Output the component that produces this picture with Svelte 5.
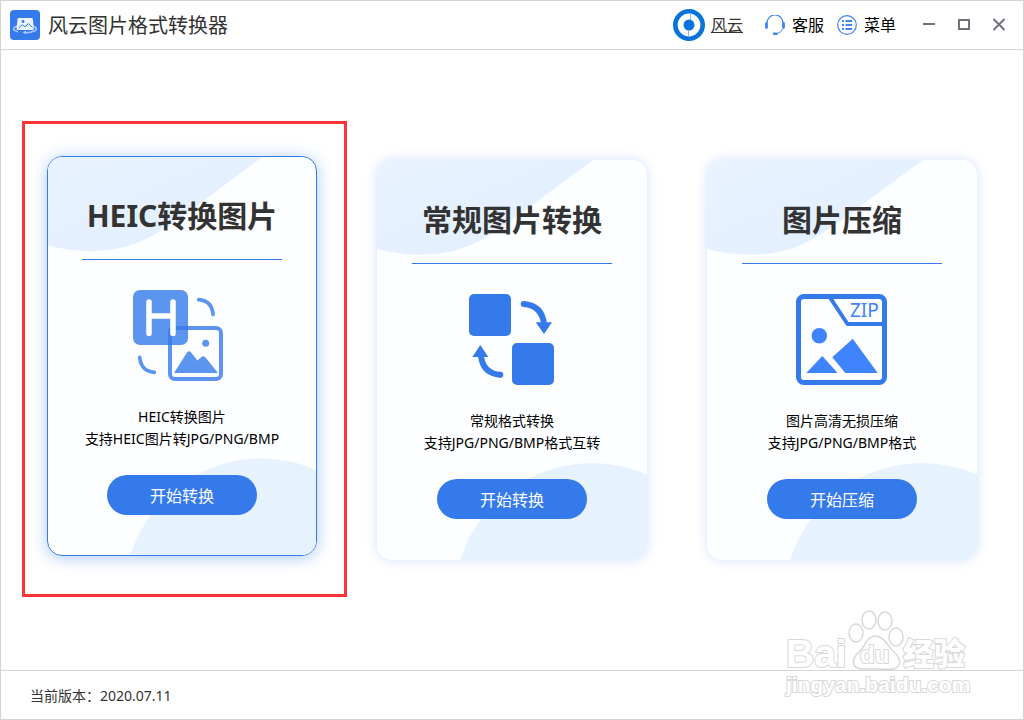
<script>
  const version = '2020.07.11';

  // Feature cards
  const cards = [
    {
      id: 'heic',
      title: 'HEIC转换图片',
      lines: ['HEIC转换图片', '支持HEIC图片转JPG/PNG/BMP'],
      action: '开始转换'
    },
    {
      id: 'convert',
      title: '常规图片转换',
      lines: ['常规格式转换', '支持JPG/PNG/BMP格式互转'],
      action: '开始转换'
    },
    {
      id: 'zip',
      title: '图片压缩',
      lines: ['图片高清无损压缩', '支持JPG/PNG/BMP格式'],
      action: '开始压缩'
    }
  ];

  let selected = $state('heic');
</script>

<div class="window">
  <header class="titlebar">
    <svg class="app-logo" viewBox="0 0 30 30" aria-hidden="true">
      <rect width="30" height="30" rx="4" fill="#347aeb" />
      <path d="M7 16C2 18 2.500 20.500 8 21.700M23 16c5 2 4.500 4.500-1 5.800-2 .6-4 .9-7 .9" fill="none" stroke="#a9c9fa" stroke-width="1.500" />
      <path d="M16 20.500l-3.500 2 3.500 1.800z" fill="#a9c9fa" />
      <path d="M9 8h12.500q1.300 0 1.400 1.300l.9 9.200q0 1.500-1.500 1.500H8q-1.500 0-1.500-1.500l1-9.200Q7.600 8 9 8z" fill="#eaf3ff" />
      <circle cx="13" cy="11.500" r="1.400" fill="#347aeb" />
      <path d="M9 17.500l3.500-2.700 2.500 2 3.500-3.300 4 4" fill="none" stroke="#347aeb" stroke-width="1" />
    </svg>
    <h1>风云图片格式转换器</h1>

    <nav class="links">
      <a class="brand" href="#home">
        <svg width="32" height="32" viewBox="0 0 32 32" aria-hidden="true">
          <circle cx="16" cy="16" r="13.700" fill="#fff" stroke="#0a73d9" stroke-width="4.600" />
          <circle cx="16" cy="16" r="5.500" fill="#0a73d9" />
          <path d="M17.500 4v7M15.500 21v7" stroke="#7fb6ec" stroke-width="1" />
        </svg>
        <span>风云</span>
      </a>
      <button type="button" class="link">
        <svg width="20" height="20" viewBox="0 0 20 20" fill="none" stroke="#3f83f5" aria-hidden="true">
          <path d="M2 8a8 8 0 0 1 16 0" stroke-width="1.200" />
          <path d="M1.500 8.500v4M18.500 8.500v4" stroke-width="2.800" stroke-linecap="round" />
          <path d="M17.500 14q-1.500 3.500-5 4.500" stroke-width="1" />
          <path d="M9 18.700h2.500" stroke-width="2.600" stroke-linecap="round" />
        </svg>
        <span>客服</span>
      </button>
      <button type="button" class="link">
        <svg width="20" height="20" viewBox="0 0 20 20" fill="none" stroke="#3f83f5" aria-hidden="true">
          <circle cx="10" cy="10" r="9.300" stroke-width="1.200" />
          <path d="M5 6h2M5 10h2M5 14h2M8.500 6H15M8.500 10H15M8.500 14H15" stroke-width="1.800" />
        </svg>
        <span>菜单</span>
      </button>
    </nav>

    <div class="controls">
      <button type="button" aria-label="最小化">
        <svg width="14" height="14" viewBox="0 0 14 14"><path d="M1 6h12" /></svg>
      </button>
      <button type="button" aria-label="最大化">
        <svg width="14" height="14" viewBox="0 0 14 14"><rect x="2" y="2" width="10" height="9" /></svg>
      </button>
      <button type="button" aria-label="关闭">
        <svg width="14" height="14" viewBox="0 0 14 14"><path d="M1.500 1l11 11M12.500 1l-11 11" /></svg>
      </button>
    </div>
  </header>

  <main>
    {#each cards as card (card.id)}
      <article class="card" class:selected={selected === card.id}>
        <svg class="waves" viewBox="0 0 270 400" preserveAspectRatio="none" aria-hidden="true">
          <defs>
            <linearGradient id="wave-{card.id}" x1="0" y1="0" x2="1" y2="1">
              <stop offset="0" stop-color="#e9f3ff" />
              <stop offset="1" stop-color="#e0eeff" />
            </linearGradient>
          </defs>
          <path d="M0 0H216L151 48C132 63 115 74 100 82C70 97 35 98 0 89z" fill="url(#wave-{card.id})" />
          <circle cx="215" cy="441" r="138" fill="#e7f2ff" />
        </svg>

        <h2>{card.title}</h2>
        <hr />

        {#if card.id === 'heic'}
          <svg class="icon" viewBox="3 0 92 91" aria-hidden="true">
            <rect width="55" height="55" rx="7" fill="#5c95f0" />
            <rect x="37" y="38" width="51" height="51" rx="5" fill="none" stroke="#5c95f0" stroke-width="4" />
            <path d="M35 55V42q0-6 6-6h14v4H42q-3 0-3 3v12z" fill="#407fea" />
            <path d="M16 12v31.500M40 12v31.500M16 26h24" fill="none" stroke="#fff" stroke-width="5.500" stroke-linecap="round" />
            <circle cx="72.700" cy="53.300" r="3.500" fill="#5c95f0" />
            <path d="M41 83l13-20.500q2-2.500 4 0l6.500 8 4-3.500q2-1.500 4 .5L85 83z" fill="#5c95f0" />
            <path d="M65.700 9.700Q79 11 80 24.300M6.700 67.300Q8 81 21.300 82.300" fill="none" stroke="#5c95f0" stroke-width="3.700" stroke-linecap="round" />
          </svg>
        {:else if card.id === 'convert'}
          <svg class="icon" viewBox="0 0 92 91" fill="#347aeb" aria-hidden="true">
            <rect x="3" width="42" height="42" rx="5" />
            <rect x="46" y="49" width="42" height="42" rx="5" />
            <path d="M57.700 10Q76 11.500 78 30M15 62Q17 79.500 34.300 80.800" fill="none" stroke="#347aeb" stroke-width="6" />
            <circle cx="57.700" cy="10" r="3" />
            <circle cx="34.300" cy="80.800" r="3" />
            <path d="M69.700 28.300H86L78 40zM6.300 63h16l-8-12z" />
          </svg>
        {:else}
          <svg class="icon" viewBox="0 0 92 91" fill="#3f83ff" aria-hidden="true">
            <rect x="2.500" y="2.500" width="86" height="86" rx="5.500" fill="none" stroke="#347aeb" stroke-width="5" />
            <path d="M34 3.500L51.500 30H87" fill="none" stroke="#347aeb" stroke-width="4" stroke-linejoin="round" />
            <text x="54" y="23" font-size="19">ZIP</text>
            <circle cx="23.300" cy="41.700" r="7.700" />
            <path d="M10.300 79l16-17 15.400 17zM36.300 63.300l20.400-18.600 25 34.300H49.300z" />
          </svg>
        {/if}

        <p>
          {#each card.lines as line}
            <span>{line}</span>
          {/each}
        </p>
        <button type="button" class="btn-start" onclick={() => (selected = card.id)}>{card.action}</button>

        {#if selected === card.id}
          <div class="marker"></div>
        {/if}
      </article>
    {/each}
  </main>

  <footer>当前版本：{version}</footer>

  <svg class="watermark" width="190" height="96" viewBox="0 0 190 96" aria-hidden="true">
    <g fill="#fff" stroke="#d2d2d2" stroke-width="1.500">
      <text class="mark-latin" x="6" y="56" font-size="39">Bai</text>
      <ellipse cx="76" cy="22" rx="7" ry="9" />
      <ellipse cx="89" cy="9" rx="7" ry="9" />
      <ellipse cx="105" cy="10" rx="7" ry="9" />
      <ellipse cx="116" cy="26" rx="7" ry="9" />
      <path d="M95 25c9 0 12 9 18 15 7 6 8 10 6 14-3 6-10 4-23 4s-19 1-22-4c-2-5 0-9 6-14 6-6 7-15 15-15z" />
      <text class="mark-latin" x="80" y="52" font-size="24">du</text>
      <text class="mark-cjk" x="123" y="54" font-size="31">经验</text>
      <text class="mark-url" x="6" y="81" font-size="21">jingyan.baidu.com</text>
    </g>
  </svg>
</div>

<style>
  :global(body) {
    margin: 0;
    background: #fff;
  }

  .window {
    position: relative;
    display: flex;
    flex-direction: column;
    box-sizing: border-box;
    min-height: 100vh;
    border: 1px solid #d4d4d4;
    color: #333;
    background: #fff;
    font-family: "Noto Sans", "Noto Sans CJK SC", sans-serif;
  }

  button {
    padding: 0;
    border: none;
    background: none;
    font-family: inherit;
    cursor: pointer;
  }

  .titlebar {
    display: flex;
    align-items: center;
    height: 48px;
    padding: 0 7px 0 9px;
    border-bottom: 1px solid #d4d4d4;
  }

  .app-logo {
    width: 30px;
    height: 30px;
    margin-right: 8px;
  }

  h1 {
    margin: 0;
    padding-top: 2px;
    font-size: 20px;
    line-height: 28px;
    font-weight: 400;
  }

  .links {
    display: flex;
    align-items: center;
    gap: 13px;
    margin-left: auto;
  }

  .brand,
  .link {
    display: flex;
    align-items: center;
    gap: 7px;
    color: #000;
    font-size: 16px;
    line-height: 24px;
  }

  .brand {
    gap: 6px;
    margin-right: 9px;
    color: #333;
  }

  .controls {
    display: flex;
    margin-left: 15px;
  }

  .controls button {
    display: flex;
    align-items: center;
    justify-content: center;
    width: 35px;
    height: 30px;
  }

  .controls svg {
    fill: none;
    stroke: #756e7c;
    stroke-width: 2;
  }

  main {
    flex: 1;
    display: grid;
    grid-template-columns: repeat(3, 1fr);
    place-items: center;
    padding: 0 16px;
  }

  .card {
    position: relative;
    display: flex;
    flex-direction: column;
    align-items: center;
    width: 270px;
    padding: 39px 0 41px;
    border-radius: 15px;
    background: #fdfeff;
    box-shadow: 0 0 12px rgba(52, 122, 235, 0.22);
  }

  /* The active card is lifted a little */
  .card.selected {
    box-shadow: 0 2px 16px rgba(52, 122, 235, 0.4);
    transform: translateY(-4px);
  }

  .card > * {
    position: relative;
  }

  .card .waves {
    position: absolute;
    inset: 0;
    width: 100%;
    height: 100%;
    border-radius: 15px;
  }

  .card.selected .waves {
    box-sizing: border-box;
    border: 1px solid #347aeb;
  }

  .card .marker {
    position: absolute;
    inset: -35px -30px -41px -25px;
    border: 3px solid #fb3438;
    pointer-events: none;
  }

  h2 {
    margin: 0;
    font-size: 30px;
    line-height: 42px;
    font-weight: 700;
  }

  hr {
    width: 200px;
    height: 1px;
    margin: 22px 0 30px;
    border: none;
    background: #347aeb;
  }

  .icon {
    width: 92px;
    height: 91px;
    overflow: visible;
  }

  p {
    display: flex;
    flex-direction: column;
    align-items: center;
    margin: 25px 0;
    color: #000;
    font-size: 14px;
    line-height: 22px;
  }

  .btn-start {
    width: 150px;
    height: 40px;
    border-radius: 20px;
    background: #347aeb;
    color: #fff;
    font-size: 16px;
  }

  .btn-start:hover {
    background: #2a6ddb;
  }

  footer {
    padding: 15px 29px 13px;
    border-top: 1px solid #d4d4d4;
    font-size: 14px;
    line-height: 20px;
  }

  .watermark {
    position: absolute;
    right: 53px;
    bottom: 12px;
    overflow: visible;
    opacity: 0.85;
    pointer-events: none;
  }

  .watermark text {
    paint-order: stroke;
    stroke-width: 2px;
  }

  .mark-latin {
    font-family: "Liberation Sans", sans-serif;
    font-weight: 700;
  }

  .mark-cjk {
    font-family: "Noto Sans CJK SC", sans-serif;
    font-weight: 900;
  }

  .mark-url {
    font-family: "Liberation Sans", sans-serif;
    font-weight: 700;
  }
</style>
